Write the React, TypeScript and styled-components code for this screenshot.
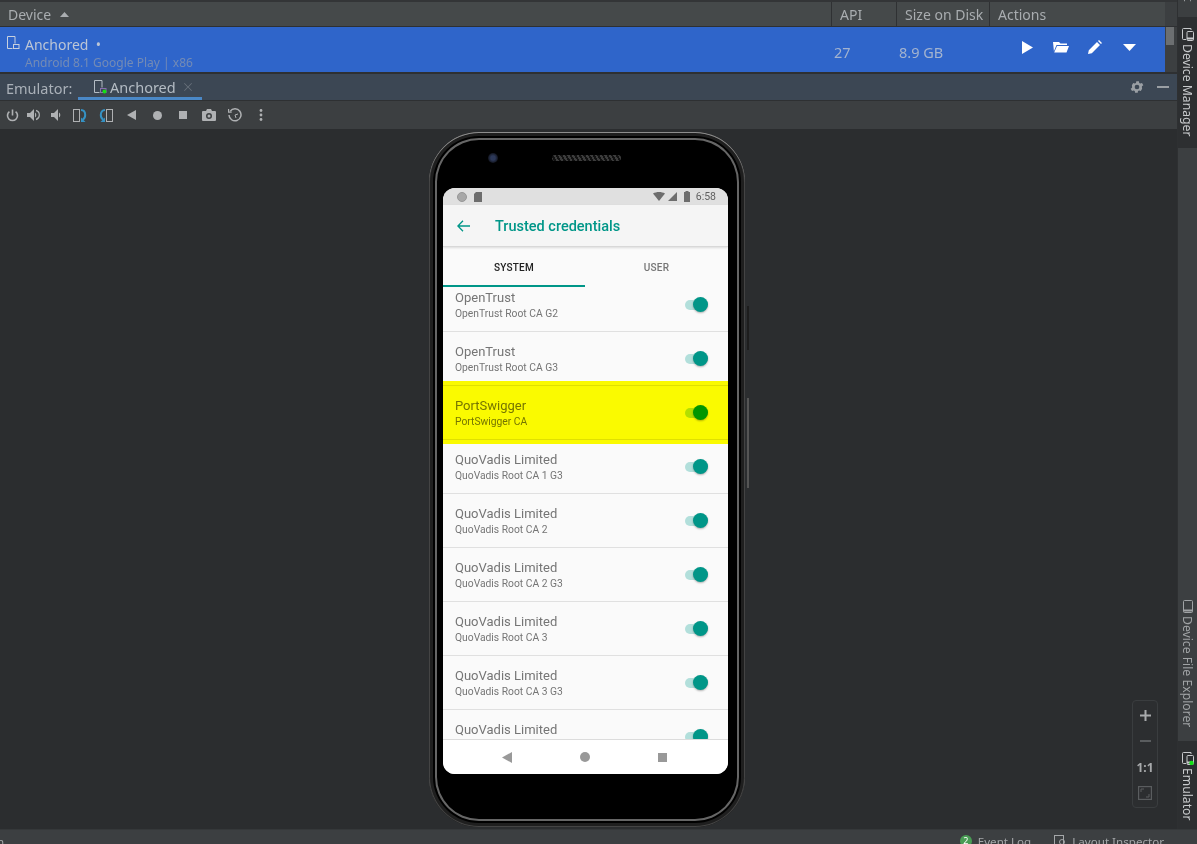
import React from "react";
import styled, { createGlobalStyle } from "styled-components";

const GlobalStyle = createGlobalStyle`
    html, body {
        margin: 0;
        padding: 0;
        height: 844px;
        overflow: hidden;
        background: #2b2d2f;
        font-family: "Noto Sans", "Open Sans", sans-serif;
    }
    * {
        box-sizing: border-box;
    }
`;

const Page = styled.div`
    width: 1197px;
    height: 844px;
    display: flex;
    flex-direction: column;
    overflow: hidden;
`;

const Workspace = styled.div`
    flex: 1;
    display: flex;
    min-height: 0;
`;

const MainColumn = styled.div`
    width: 1177px;
    display: flex;
    flex-direction: column;
`;

const TableHeader = styled.div`
    height: 27px;
    display: flex;
    background: #3c3f41;
    border-top: 2px solid #333537;
    border-bottom: 1px solid #2e3032;
`;

const HeaderCell = styled.div<{ $w: number; $sep?: boolean }>`
    width: ${(p) => p.$w}px;
    padding-left: 8px;
    display: flex;
    align-items: center;
    gap: 9px;
    font-size: 14px;
    color: #a9adb0;
    background: #45494a;
    border-left: ${(p) => (p.$sep ? "1px solid #2f3133" : "none")};
`;

const DeviceRow = styled.div`
    height: 45px;
    display: flex;
    background: #3c3f41;
`;

const DeviceSelected = styled.div`
    width: 1165px;
    display: flex;
    background: #2f65ca;
`;

const DeviceName = styled.div`
    width: 831px;
    padding: 9px 0 0 7px;
    display: flex;
    gap: 4px;
`;

const NameLines = styled.div`
    display: flex;
    flex-direction: column;
`;

const NameText = styled.span`
    font-size: 14px;
    line-height: 18px;
    color: #bcc6d6;
`;

const SubText = styled.span`
    font-size: 12px;
    line-height: 18px;
    color: #748bb5;
`;

const DeviceValue = styled.div<{ $w: number }>`
    width: ${(p) => p.$w}px;
    padding: 16px 0 0 3px;
    font-size: 14.5px;
    line-height: 18px;
    color: #a3b3cf;
`;

const RowActions = styled.div`
    flex: 1;
    display: flex;
    align-items: flex-start;
    padding: 13px 0 0 21px;
    color: #fff;
`;

const ActionSlot = styled.div`
    width: 34px;
    height: 14px;
    display: flex;
    align-items: center;
    justify-content: center;
`;

const ScrollTrack = styled.div`
    flex: 1;
    padding-left: 1px;
`;

const ScrollThumb = styled.div`
    width: 8px;
    height: 18px;
    background: #6c6f71;
`;

const EmulatorBar = styled.div`
    height: 29px;
    display: flex;
    align-items: stretch;
    padding-left: 6px;
    background: #3c4754;
    border-top: 2px solid #2e3032;
    border-bottom: 1px solid #2e3032;
`;

const EmulatorLabel = styled.span`
    width: 72px;
    font-size: 14.5px;
    line-height: 28px;
    color: #a9b0b8;
`;

const EmulatorTab = styled.div`
    width: 124px;
    display: flex;
    align-items: center;
    padding: 3px 0 0 16px;
    border-bottom: 3px solid #4a88c7;
    font-size: 14.5px;
    color: #b4bcc4;
`;

const TabTitle = styled.span`
    margin: 0 8px 0 2px;
`;

const TabClose = styled.span`
    display: flex;
    color: #69727c;
`;

const BarEnd = styled.div`
    margin-left: auto;
    display: flex;
    align-items: center;
    gap: 12px;
    padding-right: 8px;
    color: #9a9fa4;
`;

const Toolbar = styled.div`
    height: 28px;
    display: flex;
    align-items: center;
    padding-left: 1px;
    background: #3c3f41;
    color: #afb1b3;
`;

const ToolSlot = styled.div<{ $w: number }>`
    width: ${(p) => p.$w}px;
    display: flex;
    justify-content: center;
`;

const Canvas = styled.div`
    position: relative;
    flex: 1;
    display: flex;
    justify-content: center;
    padding: 3px 3px 0 0;
    background: #2b2d2f;
`;

const Phone = styled.div`
    position: relative;
    width: 316px;
    height: 695px;
    display: flex;
    flex-direction: column;
    padding: 0 0 0 14px;
    background: #000;
    border-radius: 50px;
    box-shadow: inset 0 1px 0 #8e8e8e, inset 0 0 0 1px #444, inset 0 0 0 4px #1f1f1f,
        inset 0 0 0 6px #000, inset 0 0 0 8px #666;

    &::before,
    &::after {
        content: "";
        position: absolute;
        right: -4px;
        width: 2px;
    }
    &::before {
        top: 174px;
        height: 44px;
        background: #1d1d1d;
    }
    &::after {
        top: 266px;
        height: 90px;
        background: #555;
    }
`;

const Earpiece = styled.div`
    height: 56px;
    flex: none;
    display: flex;
    align-items: flex-start;
    padding: 21px 0 0 45px;
    gap: 54px;
`;

const Camera = styled.div`
    width: 10px;
    height: 10px;
    border-radius: 50%;
    background: radial-gradient(circle, #2c3858 0 30%, #12151f 70%);
`;

const Speaker = styled.div`
    width: 69px;
    height: 6px;
    margin-top: 2px;
    border-radius: 3px;
    background: repeating-linear-gradient(60deg, #3c3c3c 0 2px, #111 2px 4px);
`;

const Screen = styled.div`
    width: 285px;
    height: 586px;
    display: flex;
    flex-direction: column;
    border-radius: 12px;
    overflow: hidden;
    background: #fafafa;
    font-family: Roboto, sans-serif;
`;

const StatusTop = styled.div`
    height: 17px;
    flex: none;
    display: flex;
    align-items: center;
    padding: 0 12px 0 14px;
    background: #e0e0e0;
    color: #6d6d6d;
`;

const StatusDot = styled.div`
    width: 10px;
    height: 10px;
    border-radius: 50%;
    background: #a8a8a8;
    border: 1px solid #979797;
`;

const SdCard = styled.svg`
    margin-left: 7px;
`;

const StatusRight = styled.div`
    margin-left: auto;
    display: flex;
    align-items: center;
    gap: 3px;
`;

const Battery = styled.svg`
    margin-left: 4px;
`;

const Clock = styled.span`
    margin-left: 3px;
    font-size: 10.5px;
    color: #5f5f5f;
`;

const AppBar = styled.div`
    height: 42px;
    flex: none;
    display: flex;
    align-items: center;
    gap: 25px;
    padding-left: 14px;
    background: #f5f5f5;
    color: #009688;
    font-size: 14.5px;
    font-weight: 500;
    border-bottom: 1px solid #d8d8d8;
    box-shadow: 0 1px 2px rgba(0, 0, 0, 0.12);
    position: relative;
`;

const AppBarTitle = styled.span`
    padding-top: 2px;
`;

const Tabs = styled.div`
    height: 40px;
    flex: none;
    display: flex;
`;

const TabItem = styled.div<{ $active?: boolean }>`
    width: 142px;
    flex: ${(p) => (p.$active ? "none" : "1")};
    padding-top: 15px;
    text-align: center;
    font-size: 10px;
    line-height: 12px;
    font-weight: 500;
    letter-spacing: 0.2px;
    color: ${(p) => (p.$active ? "#212121" : "#757575")};
    border-bottom: 2px solid ${(p) => (p.$active ? "#009688" : "transparent")};
`;

const CertList = styled.div`
    flex: 1;
    min-height: 0;
    overflow: hidden;
`;

const CertRows = styled.div`
    margin-top: -9px;
`;

const CertRow = styled.div<{ $marked?: boolean }>`
    position: relative;
    height: 54px;
    display: flex;
    align-items: center;
    justify-content: space-between;
    padding: 0 20px 0 12px;
    border-bottom: 1px solid #e0e0e0;

    &::after {
        content: ${(p) => (p.$marked ? '""' : "none")};
        position: absolute;
        left: 0;
        right: 0;
        top: -5px;
        bottom: -5px;
        background: #ffff00;
        mix-blend-mode: multiply;
        pointer-events: none;
    }
`;

const CertText = styled.div`
    display: flex;
    flex-direction: column;
    padding-top: 1px;
`;

const CertTitle = styled.span`
    font-size: 13px;
    line-height: 18px;
    color: #757575;
`;

const CertSub = styled.span`
    font-size: 10.3px;
    line-height: 14px;
    color: #757575;
`;

const Toggle = styled.div`
    position: relative;
    width: 23px;
    height: 10px;
    border-radius: 5px;
    background: #b2dfdb;
`;

const ToggleThumb = styled.div`
    position: absolute;
    right: 0;
    top: -3px;
    width: 15px;
    height: 15px;
    border-radius: 50%;
    background: #009688;
    box-shadow: 0 1px 2px rgba(0, 0, 0, 0.3);
`;

const NavBar = styled.div`
    height: 35px;
    flex: none;
    display: flex;
    align-items: center;
    justify-content: center;
    gap: 68px;
    padding-right: 2px;
    background: #fff;
    border-top: 1px solid #dcdcdc;
    color: #999;
`;

const ZoomPanel = styled.div`
    position: absolute;
    right: 19px;
    top: 571px;
    width: 26px;
    height: 108px;
    display: flex;
    flex-direction: column;
    align-items: center;
    padding-top: 1px;
    background: #2c2e30;
    border: 1px solid #3a3d3f;
    border-radius: 4px;
`;

const ZoomSlot = styled.div<{ $dim?: boolean }>`
    height: 26px;
    display: flex;
    align-items: center;
    justify-content: center;
    font-size: 12px;
    font-weight: 700;
    color: ${(p) => (p.$dim ? "#5a5d5f" : "#a8aaac")};
`;

const SideStrip = styled.div`
    width: 20px;
    display: flex;
    flex-direction: column;
    background: #3c3f41;
    border-left: 1px solid #2e3032;
`;

const SideStub = styled.div`
    height: 17px;
    display: flex;
    justify-content: center;
    overflow: hidden;
    color: #a0a3a5;
`;

const StubLabel = styled.span`
    writing-mode: vertical-rl;
    margin-top: -3px;
    font-size: 12.3px;
    line-height: 18px;
`;

const SideTab = styled.div<{ $active?: boolean; $h: number; $top: number }>`
    height: ${(p) => p.$h}px;
    display: flex;
    flex-direction: column;
    align-items: center;
    gap: 3px;
    padding-top: ${(p) => p.$top}px;
    background: ${(p) => (p.$active ? "#2d2f31" : "transparent")};
    color: ${(p) => (p.$active ? "#c8cacc" : "#a0a3a5")};
`;

const SideLabel = styled.span`
    writing-mode: vertical-rl;
    margin-right: 2px;
    font-size: 12.2px;
    line-height: 18px;
`;

const SideGap = styled.div`
    flex: 1;
`;

const BottomBar = styled.div`
    height: 15px;
    flex: none;
    display: flex;
    overflow: hidden;
    padding-right: 33px;
    background: #3c3f41;
    color: #a4a7a9;
    font-size: 11.6px;
    line-height: 17px;
    border-top: 1px solid #35383a;
    white-space: nowrap;
`;

const BottomItem = styled.div`
    display: flex;
    align-items: flex-start;
    gap: 6px;
    padding-top: 3px;
    margin-left: 23px;
`;

const EventBadge = styled.div`
    width: 12px;
    height: 12px;
    margin-top: 2px;
    border-radius: 50%;
    background: #499c54;
    color: #fff;
    font-size: 9px;
    line-height: 12px;
    text-align: center;
`;

const BottomLeft = styled.span`
    margin-right: auto;
    margin-left: -3px;
    padding-top: 3px;
`;

const Filled = ({ w, h = w, d }: { w: number; h?: number; d: string }) => (
    <svg width={w} height={h} viewBox={`0 0 ${w} ${h}`} fill="currentColor">
        <path d={d} />
    </svg>
);

const DeviceIcon = ({ dot, color = "#c7d0de" }: { dot?: boolean; color?: string }) => (
    <svg width="14" height="14" viewBox="0 0 14 14" fill="none" stroke={color} strokeWidth="1">
        <path d="M5.5 12.5H.5V.5h7.5V7.5" />
        <rect x="6.5" y="8.5" width="5.5" height="4" stroke={dot ? "#8a6fb0" : color} />
        {dot && <circle cx="10.5" cy="11.5" r="2" fill="#16e016" stroke="none" />}
    </svg>
);

const PowerIcon = () => (
    <svg width="13" height="13" viewBox="0 0 13 13" fill="none" stroke="currentColor" strokeWidth="1.6">
        <path d="M3.4 2.6a5 5 0 1 0 6.2 0M6.5 0.5v6" />
    </svg>
);

const VolumeUp = () => (
    <svg width="14" height="12" viewBox="0 0 14 12" fill="currentColor">
        <path d="M0 4h3l4-4v12L3 8H0z" />
        <path d="M8 3.5a3 3 0 0 1 0 5z" />
        <path d="M9 .8a5.4 5.4 0 0 1 0 10.4v-1.4a4 4 0 0 0 0-7.6z" />
    </svg>
);

const VolumeDown = () => <Filled w={11} h={12} d="M0 4h3l4-4v12L3 8H0zM8 3.5a3 3 0 0 1 0 5z" />;

const RotateLeft = () => (
    <svg width="14" height="13" viewBox="0 0 14 13" fill="none">
        <rect x="0.5" y="0.5" width="6" height="12" stroke="#afb1b3" />
        <path d="M8 1c2.6 0 4.2 1.8 4.2 5 0 2.2-.8 3.6-2.4 4.6" stroke="#3592c4" strokeWidth="2" />
        <path d="M8 8.5v4.5h4.5z" fill="#3592c4" />
    </svg>
);

const RotateRight = () => (
    <svg width="14" height="13" viewBox="0 0 14 13" fill="none">
        <rect x="7.5" y="0.5" width="6" height="12" stroke="#afb1b3" />
        <path d="M6 1C3.4 1 1.8 2.8 1.8 6c0 2.2.8 3.6 2.4 4.6" stroke="#3592c4" strokeWidth="2" />
        <path d="M6 8.5V13H1.5z" fill="#3592c4" />
    </svg>
);

const CameraIcon = () => (
    <svg width="14" height="12" viewBox="0 0 14 12" fill="currentColor">
        <path
            fillRule="evenodd"
            d="M1 2h3l1-2h4l1 2h3a1 1 0 0 1 1 1v8a1 1 0 0 1-1 1H1a1 1 0 0 1-1-1V3a1 1 0 0 1 1-1zm6 2a3 3 0 1 0 0 6 3 3 0 0 0 0-6zm0 1.5a1.5 1.5 0 1 1 0 3 1.5 1.5 0 0 1 0-3z"
        />
    </svg>
);

const SnapshotIcon = () => (
    <svg width="14" height="14" viewBox="0 0 14 14" fill="none" stroke="currentColor" strokeWidth="1.5">
        <path d="M2.2 3.2A6 6 0 1 1 1 7" />
        <path d="M7 7l3-1M7 7l1 3" strokeWidth="1" />
        <path d="M0.5 1v3.2h3.2" strokeWidth="1.3" />
    </svg>
);

const MoreIcon = () => (
    <svg width="4" height="12" viewBox="0 0 4 12" fill="currentColor">
        <circle cx="2" cy="1.5" r="1.4" />
        <circle cx="2" cy="6" r="1.4" />
        <circle cx="2" cy="10.5" r="1.4" />
    </svg>
);

const GearIcon = () => (
    <svg width="16" height="16" viewBox="0 0 24 24" fill="currentColor">
        <path d="M19.4 13a7.5 7.5 0 0 0 0-2l2.1-1.6-2-3.5-2.5 1a7.5 7.5 0 0 0-1.7-1l-.4-2.6h-4l-.4 2.6a7.5 7.5 0 0 0-1.7 1l-2.5-1-2 3.5L4.6 11a7.5 7.5 0 0 0 0 2l-2.1 1.6 2 3.5 2.5-1a7.5 7.5 0 0 0 1.7 1l.4 2.6h4l.4-2.6a7.5 7.5 0 0 0 1.7-1l2.5 1 2-3.5zM12 15.5a3.5 3.5 0 1 1 0-7 3.5 3.5 0 0 1 0 7z" />
    </svg>
);

const FolderIcon = () => (
    <svg width="16" height="12" viewBox="0 0 16 12" fill="currentColor">
        <path d="M0 1h6l1.5 1.5H14V4H3.5L1 10V11zM4 5h12l-2.5 6.5H1.2z" />
    </svg>
);

const PencilIcon = () => (
    <svg width="14" height="14" viewBox="0 0 14 14" fill="currentColor">
        <path d="M0 14l.8-3.8L9 2l3 3-8.2 8.2zM10 1l1-1 3 3-1 1z" />
    </svg>
);

const DevicePairIcon = ({ dot }: { dot?: boolean }) => (
    <svg width="12" height="13" viewBox="0 0 12 13" fill="none" stroke="currentColor">
        <path d="M9 2V.5H1.5a1 1 0 0 0-1 1v9a1 1 0 0 0 1 1H4" />
        <rect x="5" y="3.5" width="6.5" height="9" rx="1" />
        <path d="M5 10.5h6.5" strokeWidth="2" />
        {dot && <circle cx="9.5" cy="11" r="2.2" fill="#16e016" stroke="none" />}
    </svg>
);

const HandsetIcon = () => (
    <svg width="10" height="13" viewBox="0 0 10 13" fill="none" stroke="currentColor">
        <rect x="0.5" y="0.5" width="9" height="12" rx="1" />
        <path d="M0.5 10.5h9" strokeWidth="2" />
    </svg>
);

const certs = [
    { title: "OpenTrust", sub: "OpenTrust Root CA G2" },
    { title: "OpenTrust", sub: "OpenTrust Root CA G3" },
    { title: "PortSwigger", sub: "PortSwigger CA", marked: true },
    { title: "QuoVadis Limited", sub: "QuoVadis Root CA 1 G3" },
    { title: "QuoVadis Limited", sub: "QuoVadis Root CA 2" },
    { title: "QuoVadis Limited", sub: "QuoVadis Root CA 2 G3" },
    { title: "QuoVadis Limited", sub: "QuoVadis Root CA 3" },
    { title: "QuoVadis Limited", sub: "QuoVadis Root CA 3 G3" },
    { title: "QuoVadis Limited", sub: "QuoVadis Root CA 4" },
];

const tools = [
    { w: 22, icon: <PowerIcon /> },
    { w: 22, icon: <VolumeUp /> },
    { w: 22, icon: <VolumeDown /> },
    { w: 26, icon: <RotateLeft /> },
    { w: 25, icon: <RotateRight /> },
    { w: 26, icon: <Filled w={9} h={10} d="M9 0v10L0 5z" /> },
    { w: 26, icon: <Filled w={9} h={9} d="M4.5 0a4.5 4.5 0 1 1 0 9 4.5 4.5 0 0 1 0-9z" /> },
    { w: 26, icon: <Filled w={8} h={8} d="M0 0h8v8H0z" /> },
    { w: 26, icon: <CameraIcon /> },
    { w: 26, icon: <SnapshotIcon /> },
    { w: 26, icon: <MoreIcon /> },
];

export default function App() {
    return (
        <Page>
            <GlobalStyle />
            <Workspace>
                <MainColumn>
                    <TableHeader>
                        <HeaderCell $w={831}>
                            Device
                            <Filled w={9} h={5} d="M4.5 0L9 5H0z" />
                        </HeaderCell>
                        <HeaderCell $w={65} $sep>API</HeaderCell>
                        <HeaderCell $w={93} $sep>Size on Disk</HeaderCell>
                        <HeaderCell $w={176} $sep>Actions</HeaderCell>
                    </TableHeader>
                    <DeviceRow>
                        <DeviceSelected>
                            <DeviceName>
                                <DeviceIcon />
                                <NameLines>
                                    <NameText>Anchored&nbsp;&nbsp;•</NameText>
                                    <SubText>Android 8.1 Google Play | x86</SubText>
                                </NameLines>
                            </DeviceName>
                            <DeviceValue $w={65}>27</DeviceValue>
                            <DeviceValue $w={93}>8.9 GB</DeviceValue>
                            <RowActions>
                                <ActionSlot>
                                    <Filled w={11} h={13} d="M0 0l11 6.5L0 13z" />
                                </ActionSlot>
                                <ActionSlot>
                                    <FolderIcon />
                                </ActionSlot>
                                <ActionSlot>
                                    <PencilIcon />
                                </ActionSlot>
                                <ActionSlot>
                                    <Filled w={13} h={7} d="M0 0h13L6.5 7z" />
                                </ActionSlot>
                            </RowActions>
                        </DeviceSelected>
                        <ScrollTrack>
                            <ScrollThumb />
                        </ScrollTrack>
                    </DeviceRow>
                    <EmulatorBar>
                        <EmulatorLabel>Emulator:</EmulatorLabel>
                        <EmulatorTab>
                            <DeviceIcon dot color="#b4bcc4" />
                            <TabTitle>Anchored</TabTitle>
                            <TabClose>
                                <Filled w={8} h={8} d="M0 .6L.6 0 4 3.4 7.4 0l.6.6L4.6 4 8 7.4l-.6.6L4 4.6.6 8 0 7.4 3.4 4z" />
                            </TabClose>
                        </EmulatorTab>
                        <BarEnd>
                            <GearIcon />
                            <Filled w={12} h={2} d="M0 0h12v2H0z" />
                        </BarEnd>
                    </EmulatorBar>
                    <Toolbar>
                        {tools.map((tool, i) => (
                            <ToolSlot key={i} $w={tool.w}>
                                {tool.icon}
                            </ToolSlot>
                        ))}
                    </Toolbar>
                    <Canvas>
                        <Phone>
                            <Earpiece>
                                <Camera />
                                <Speaker />
                            </Earpiece>
                            <Screen>
                                <StatusTop>
                                    <StatusDot />
                                    <SdCard width="8" height="10" viewBox="0 0 8 10" fill="currentColor">
                                        <path d="M2 0h6v10H0V2z" />
                                    </SdCard>
                                    <StatusRight>
                                        <Filled w={12} h={9} d="M0 1.5C3.5-.5 8.5-.5 12 1.5L6 9z" />
                                        <Filled w={9} h={9} d="M9 0v9H0z" />
                                        <Battery width="6" height="11" viewBox="0 0 6 11" fill="currentColor">
                                            <path d="M1.5 0h3v1H6v10H0V1h1.5z" />
                                        </Battery>
                                        <Clock>6:58</Clock>
                                    </StatusRight>
                                </StatusTop>
                                <AppBar>
                                    <svg width="13" height="12" viewBox="0 0 13 12" fill="none" stroke="currentColor" strokeWidth="1.3">
                                        <path d="M13 6H1M6 .7L.9 6 6 11.3" />
                                    </svg>
                                    <AppBarTitle>Trusted credentials</AppBarTitle>
                                </AppBar>
                                <Tabs>
                                    <TabItem $active>SYSTEM</TabItem>
                                    <TabItem>USER</TabItem>
                                </Tabs>
                                <CertList>
                                    <CertRows>
                                        {certs.map((cert, i) => (
                                            <CertRow key={i} $marked={cert.marked}>
                                                <CertText>
                                                    <CertTitle>{cert.title}</CertTitle>
                                                    <CertSub>{cert.sub}</CertSub>
                                                </CertText>
                                                <Toggle>
                                                    <ToggleThumb />
                                                </Toggle>
                                            </CertRow>
                                        ))}
                                    </CertRows>
                                </CertList>
                                <NavBar>
                                    <Filled w={10} h={11} d="M10 0v11L0 5.5z" />
                                    <Filled w={10} h={10} d="M5 0a5 5 0 1 1 0 10A5 5 0 0 1 5 0z" />
                                    <Filled w={9} h={9} d="M0 0h9v9H0z" />
                                </NavBar>
                            </Screen>
                        </Phone>
                        <ZoomPanel>
                            <ZoomSlot>
                                <Filled w={11} h={11} d="M4.5 0h2v4.5H11v2H6.5V11h-2V6.5H0v-2h4.5z" />
                            </ZoomSlot>
                            <ZoomSlot $dim>
                                <Filled w={11} h={2} d="M0 0h11v2H0z" />
                            </ZoomSlot>
                            <ZoomSlot>1:1</ZoomSlot>
                            <ZoomSlot $dim>
                                <svg width="14" height="14" viewBox="0 0 14 14" fill="none" stroke="currentColor">
                                    <rect x="0.5" y="0.5" width="13" height="13" strokeWidth="1.4" />
                                    <path d="M3 6V3h3M11 8v3H8" />
                                </svg>
                            </ZoomSlot>
                        </ZoomPanel>
                    </Canvas>
                </MainColumn>
                <SideStrip>
                    <SideStub>
                        <StubLabel>t</StubLabel>
                    </SideStub>
                    <SideTab $active $h={131} $top={11}>
                        <DevicePairIcon />
                        <SideLabel>Device Manager</SideLabel>
                    </SideTab>
                    <SideGap />
                    <SideTab $h={151} $top={10}>
                        <HandsetIcon />
                        <SideLabel>Device File Explorer</SideLabel>
                    </SideTab>
                    <SideTab $active $h={88} $top={11}>
                        <DevicePairIcon dot />
                        <SideLabel>Emulator</SideLabel>
                    </SideTab>
                </SideStrip>
            </Workspace>
            <BottomBar>
                <BottomLeft>n</BottomLeft>
                <BottomItem>
                    <EventBadge>2</EventBadge>
                    Event Log
                </BottomItem>
                <BottomItem>
                    <svg width="12" height="12" viewBox="0 0 12 12" fill="none" stroke="currentColor">
                        <rect x="0.5" y="2.5" width="9" height="9" />
                        <circle cx="8" cy="9" r="2.5" />
                    </svg>
                    Layout Inspector
                </BottomItem>
            </BottomBar>
        </Page>
    );
}
